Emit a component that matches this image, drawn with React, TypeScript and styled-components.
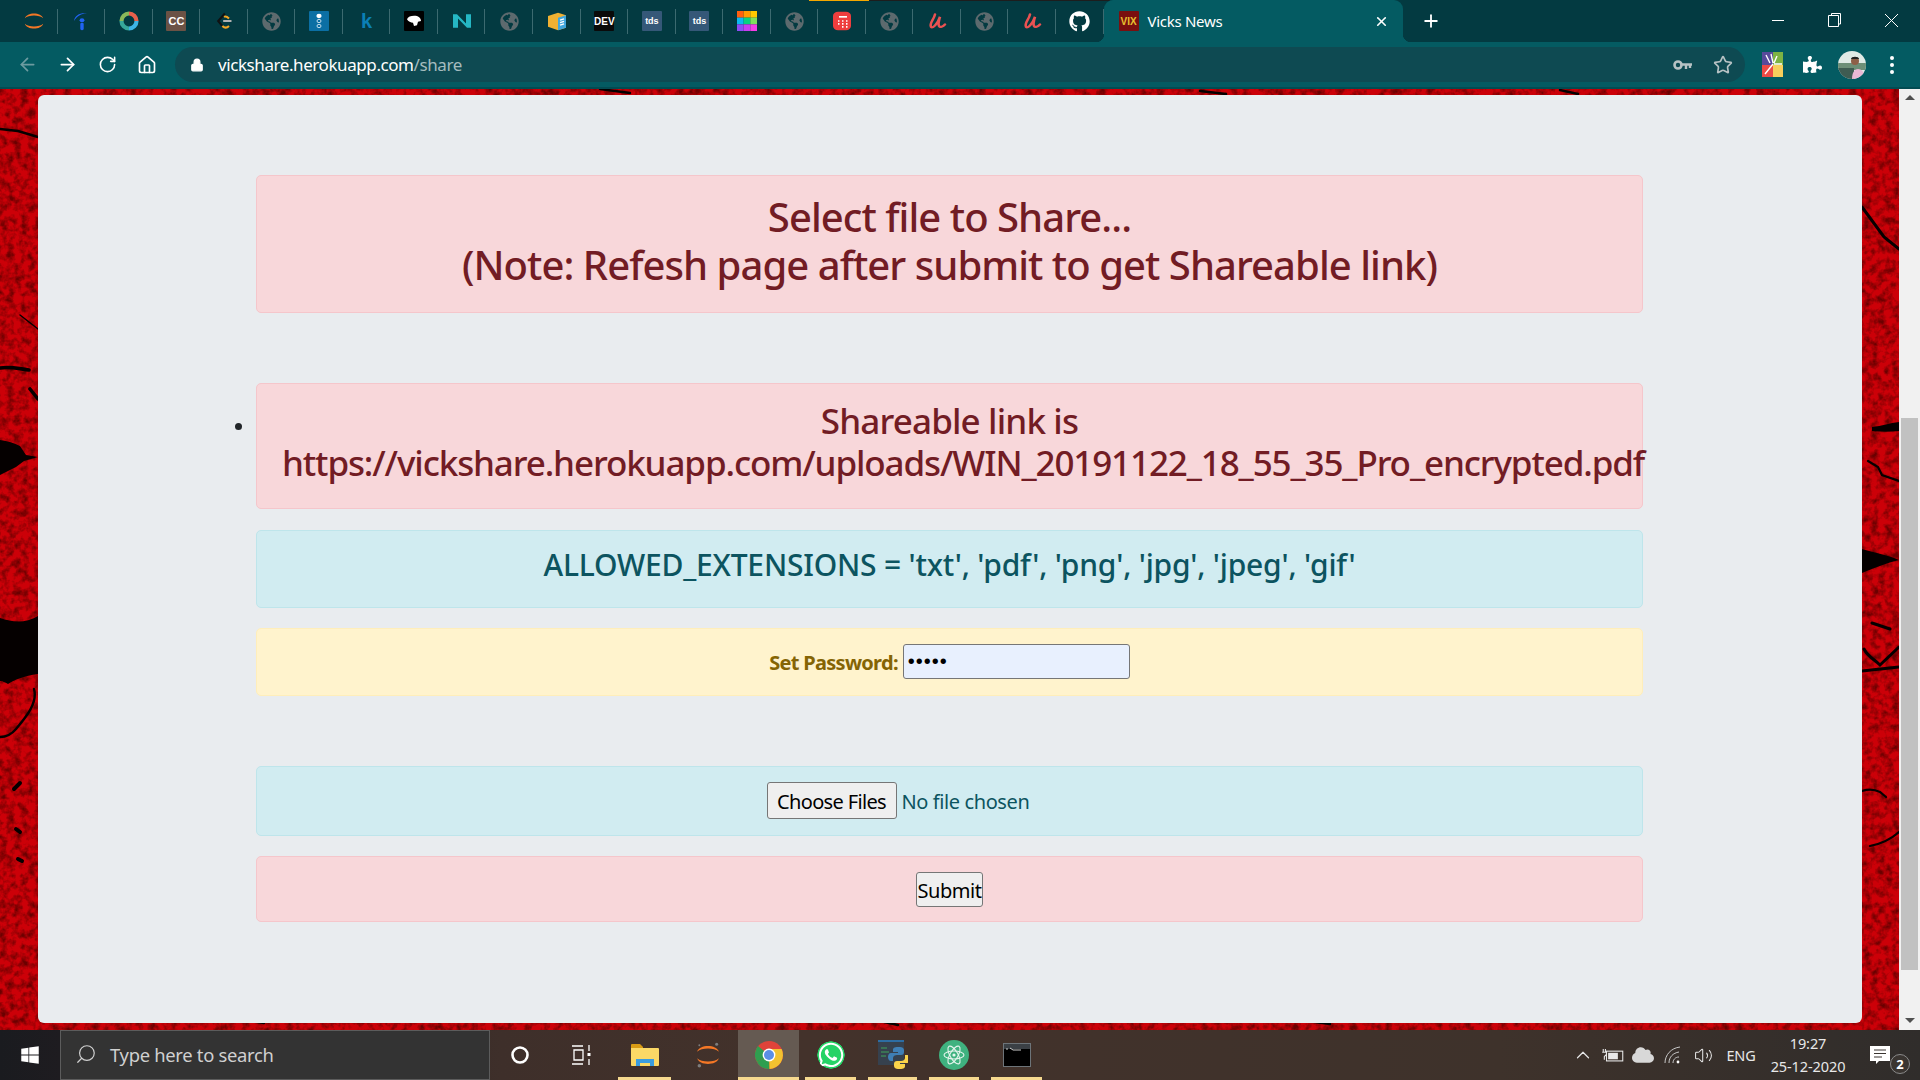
import React from 'react';
import styled, { createGlobalStyle } from 'styled-components';
import { ArrowLeft, ArrowRight, ChevronUp, Home, Lock, Plus, RotateCw, Search, Star, Volume2, X } from 'lucide-react';
import { FaCloud, FaGithub, FaGlobeAmericas, FaPuzzlePiece, FaWhatsapp, FaWindows } from 'react-icons/fa';

const GlobalStyle = createGlobalStyle`
  html, body {
    margin: 0;
    height: 100%;
    overflow: hidden;
  }
  body {
    font-family: 'Noto Sans', 'Open Sans', sans-serif;
  }
  * {
    box-sizing: border-box;
  }
`;

const Screen = styled.div`
  width: 1920px;
  height: 1080px;
  display: flex;
  flex-direction: column;
  overflow: hidden;
`;

const TitleBar = styled.div`
  height: 42px;
  flex: none;
  display: flex;
  align-items: stretch;
  padding-left: 10px;
  background: #033a41;
  color: #fff;
  position: relative;
`;

const LoadStrip = styled.div<{ $color: string; $left: number; $width: number }>`
  position: absolute;
  top: 0;
  left: ${({ $left }) => $left}px;
  width: ${({ $width }) => $width}px;
  height: 1px;
  background: ${({ $color }) => $color};
`;

const PinnedTab = styled.div`
  width: 47.55px;
  flex: none;
  display: flex;
  align-items: center;
  justify-content: center;
  position: relative;
  &::after {
    content: '';
    position: absolute;
    right: 0;
    top: 9px;
    height: 25px;
    width: 1px;
    background: #3c6a70;
  }
  &:last-of-type::after {
    display: none;
  }
`;

const ActiveTab = styled.div`
  width: 299px;
  flex: none;
  display: flex;
  align-items: center;
  padding: 0 14px 0 15px;
  gap: 9px;
  background: #045b62;
  border-radius: 9px 9px 0 0;
  position: relative;
  &::before,
  &::after {
    content: '';
    position: absolute;
    bottom: 0;
    width: 8px;
    height: 8px;
  }
  &::before {
    left: -8px;
    background: radial-gradient(circle at 0 0, transparent 8px, #045b62 8.5px);
  }
  &::after {
    right: -8px;
    background: radial-gradient(circle at 100% 0, transparent 8px, #045b62 8.5px);
  }
`;

const TabTitle = styled.span`
  flex: 1;
  font-size: 15px;
  letter-spacing: -0.3px;
  color: #fff;
  white-space: nowrap;
`;

const NewTab = styled.div`
  width: 56px;
  display: flex;
  align-items: center;
  justify-content: center;
`;

const WindowControls = styled.div`
  margin-left: auto;
  display: flex;
  align-items: flex-start;
  padding-top: 2px;
`;

const WindowButton = styled.div`
  width: 57px;
  height: 36px;
  display: flex;
  align-items: center;
  justify-content: center;
`;

const SquareFav = styled.div<{ $bg: string; $color?: string; $size?: number }>`
  width: 20px;
  height: 20px;
  background: ${({ $bg }) => $bg};
  color: ${({ $color }) => $color || '#fff'};
  font-family: 'Liberation Sans', sans-serif;
  font-size: ${({ $size }) => $size || 9}px;
  font-weight: 700;
  display: flex;
  align-items: center;
  justify-content: center;
  border-radius: 1px;
`;

const FavImage = styled.svg.attrs({ preserveAspectRatio: 'none' })`
  width: 20px;
  height: 20px;
  display: block;
`;

const ToolBar = styled.div`
  height: 47px;
  flex: none;
  display: flex;
  align-items: flex-start;
  padding: 5px 0 0 7px;
  background: #045b62;
  border-bottom: 2px solid #034b52;
`;

const NavButton = styled.div`
  width: 40px;
  height: 35px;
  flex: none;
  display: flex;
  align-items: center;
  justify-content: center;
  color: #fff;
`;

const Omnibox = styled.div`
  width: 1570px;
  height: 35px;
  margin-left: 8px;
  flex: none;
  border-radius: 18px;
  background: #0e4a52;
  display: flex;
  align-items: center;
  padding: 0 2px 0 15px;
  color: #fff;
`;

const UrlText = styled.span`
  margin-left: 14px;
  font-size: 17px;
  letter-spacing: -0.42px;
  color: #fff;
  flex: 1;
  & > em {
    font-style: normal;
    color: #a5bcbf;
  }
`;

const OmniIcon = styled.div`
  width: 40px;
  display: flex;
  justify-content: center;
  color: #b7c2c4;
`;

const ToolbarEnd = styled.div`
  display: flex;
  align-items: center;
  height: 35px;
  flex: 1;
  padding-left: 7px;
`;

const ToolIcon = styled.div`
  width: 40px;
  flex: none;
  display: flex;
  align-items: center;
  justify-content: center;
  color: #fff;
`;

const Viewport = styled.div`
  flex: 1;
  min-height: 0;
  display: flex;
`;

const PageArea = styled.div`
  flex: 1;
  position: relative;
  overflow: hidden;
  background: #c00000;
  padding: 6px 37px 7px 38px;
`;

const Backdrop = styled.svg`
  position: absolute;
  inset: 0;
  width: 100%;
  height: 100%;
`;

const Jumbotron = styled.main`
  position: relative;
  height: 100%;
  background: #e9ecef;
  border-radius: 6px;
  padding-top: 80px;
  color: #212529;
`;

const Container = styled.div`
  margin: 0 219px 0 218px;
`;

const variants = {
  danger: { bg: '#f8d7da', border: '#f5c6cb', color: '#721c24' },
  info: { bg: '#d1ecf1', border: '#bee5eb', color: '#0c5460' },
  warning: { bg: '#fff3cd', border: '#ffeeba', color: '#856404' }
};

const Alert = styled.div<{ $variant: keyof typeof variants; $after?: number }>`
  background: ${({ $variant }) => variants[$variant].bg};
  border: 1px solid ${({ $variant }) => variants[$variant].border};
  color: ${({ $variant }) => variants[$variant].color};
  border-radius: 5px;
  padding: 15px 25px;
  margin-bottom: ${({ $after }) => $after ?? 20}px;
  text-align: center;
`;

const FormAlert = styled(Alert)<{ $height: number }>`
  height: ${({ $height }) => $height}px;
  display: flex;
  justify-content: center;
  align-items: flex-start;
`;

const Heading2 = styled.h2`
  margin: 0 0 8px;
  padding-top: 2px;
  font-size: 40px;
  line-height: 48px;
  font-weight: 500;
  letter-spacing: -0.95px;
`;

const Heading3 = styled.h3`
  margin: 0 0 9px;
  padding-top: 1px;
  font-size: 35px;
  line-height: 42px;
  font-weight: 500;
  letter-spacing: -0.85px;
  white-space: nowrap;
`;

const LinkUrl = styled.span`
  letter-spacing: -1.12px;
`;

const Heading4 = styled.h4`
  margin: 0 0 9px;
  padding-top: 1px;
  font-size: 30px;
  line-height: 36px;
  font-weight: 500;
  letter-spacing: -0.2px;
`;

const LinkList = styled.ul`
  margin: 0;
  padding: 0;
  font-size: 20px;
  list-style: disc outside;
`;

const PasswordLabel = styled.label`
  font-size: 20px;
  font-weight: 700;
  line-height: 37px;
  letter-spacing: -0.7px;
  margin-right: 5px;
`;

const PasswordInput = styled.input`
  width: 227px;
  height: 35px;
  padding: 1px 4px;
  font-size: 20px;
  letter-spacing: 1px;
  font-family: 'Liberation Sans', sans-serif;
  background: #e8f0fe;
  color: #000;
  border: 1px solid #767676;
  border-radius: 3px;
`;

const FileInput = styled.input`
  width: 366px;
  height: 37px;
  font-family: 'Noto Sans', sans-serif;
  font-size: 20px;
  letter-spacing: -0.4px;
  color: #0c5460;
  &::file-selector-button {
    width: 130px;
    height: 37px;
    margin-right: 5px;
    padding: 2px 0 0;
    font: inherit;
    letter-spacing: -0.65px;
    color: #000;
    background: #efefef;
    border: 1px solid #767676;
    border-radius: 3px;
  }
`;

const SubmitButton = styled.button`
  width: 67px;
  height: 35px;
  padding: 1px 0 0;
  font-family: 'Noto Sans', sans-serif;
  font-size: 20px;
  letter-spacing: -0.45px;
  color: #000;
  background: #efefef;
  border: 1px solid #767676;
  border-radius: 3px;
`;

const Scrollbar = styled.div`
  width: 21px;
  flex: none;
  background: #f1f1f1;
  position: relative;
  display: flex;
  flex-direction: column;
  align-items: center;
  justify-content: space-between;
  padding: 6px 0 7px;
`;

const ScrollArrow = styled.div<{ $down?: boolean }>`
  width: 0;
  height: 0;
  border-left: 5px solid transparent;
  border-right: 5px solid transparent;
  border-bottom: ${({ $down }) => ($down ? '0' : '5px solid #505050')};
  border-top: ${({ $down }) => ($down ? '5px solid #505050' : '0')};
`;

const ScrollThumb = styled.div`
  position: absolute;
  left: 2px;
  right: 2px;
  top: 329px;
  height: 552px;
  background: #c1c1c1;
`;

const Taskbar = styled.footer`
  height: 50px;
  flex: none;
  display: flex;
  align-items: stretch;
  color: #fff;
  background: linear-gradient(90deg, #1a1b1f 0, #1e1c20 60px, #3e2f2a 500px, #43322b 800px, #3e322b 1500px, #302d2b 1920px);
`;

const StartButton = styled.div`
  width: 60px;
  flex: none;
  display: flex;
  align-items: center;
  justify-content: center;
`;

const SearchBox = styled.div`
  width: 430px;
  flex: none;
  background: #333;
  border: 1px solid #5c5c5c;
  display: flex;
  align-items: center;
  padding: 0 0 2px 14px;
  gap: 13px;
  color: #d0d0d0;
  font-size: 18.4px;
  letter-spacing: -0.3px;
`;

const FlippedSearch = styled(Search)`
  transform: scaleX(-1);
`;

const TaskIcon = styled.div<{ $width?: number; $open?: boolean; $active?: boolean }>`
  width: ${({ $width }) => $width ?? 62}px;
  flex: none;
  display: flex;
  align-items: center;
  justify-content: center;
  position: relative;
  background: ${({ $active }) => ($active ? '#655a52' : 'transparent')};
  &::after {
    content: '';
    display: ${({ $open }) => ($open ? 'block' : 'none')};
    position: absolute;
    left: ${({ $active }) => ($active ? 0 : 6)}px;
    right: ${({ $active }) => ($active ? 0 : 6)}px;
    bottom: 0;
    height: 3px;
    background: #f6d98f;
  }
`;

const WhatsappGlyph = styled(FaWhatsapp)`
  color: #fff;
  border-radius: 50%;
  background: radial-gradient(circle, #25d366 0 68%, transparent 70%);
`;

const Tray = styled.div`
  margin-left: auto;
  display: flex;
  align-items: center;
  font-size: 15px;
  color: #e8e8e8;
`;

const TrayIcon = styled.div`
  width: 30px;
  display: flex;
  justify-content: center;
  align-items: center;
`;

const Lang = styled.div`
  width: 44px;
  margin-left: 1px;
  text-align: center;
  font-size: 14.5px;
  letter-spacing: -0.2px;
`;

const Clock = styled.div`
  width: 88px;
  margin-left: 1px;
  text-align: center;
  font-size: 14.5px;
  line-height: 23px;
  letter-spacing: -0.1px;
`;

const NotifyBox = styled.div`
  width: 68px;
  position: relative;
  display: flex;
  justify-content: center;
  padding-right: 12px;
`;

const NotifyBadge = styled.span`
  position: absolute;
  right: 10px;
  top: 8px;
  width: 20px;
  height: 20px;
  border-radius: 50%;
  background: #3a3531;
  border: 1px solid #8a8a8a;
  color: #fff;
  font-size: 13px;
  font-weight: 700;
  display: flex;
  align-items: center;
  justify-content: center;
`;

const Jupyter = ({ size = 22, dots = false }: { size?: number; dots?: boolean }) => (
  <svg width={size} height={size} viewBox="0 0 24 24" fill="none">
    <path d="M2 9c2-7 18-7 20 0-4-4-16-4-20 0z" fill="#f37726" />
    <path d="M2 15c2 7 18 7 20 0-4 4-16 4-20 0z" fill="#f37726" />
    {dots && (
      <g fill="#7d7d7d">
        <circle cx="20" cy="2" r="1.4" />
        <circle cx="4" cy="3" r="0.9" />
        <circle cx="4" cy="22" r="1.6" />
      </g>
    )}
  </svg>
);

const InfoFav = () => (
  <FavImage viewBox="0 0 20 24">
    <circle cx="11" cy="11" r="2.4" fill="#2164f3" />
    <rect x="9.3" y="14" width="3.4" height="9" rx="1.6" fill="#2164f3" />
    <path d="M3 12C4 5 9 2 16 3 10 3 6 6 3 12z" fill="#2164f3" />
  </FavImage>
);

const RingFav = () => (
  <FavImage viewBox="0 0 24 24">
    <g fill="none" strokeWidth="5">
      <path d="M12 3a9 9 0 0 1 9 9" stroke="#e8604c" />
      <path d="M21 12a9 9 0 0 1-9 9" stroke="#3db4e6" />
      <path d="M12 21a9 9 0 0 1-9-9" stroke="#36a79a" />
      <path d="M3 12a9 9 0 0 1 9-9" stroke="#8bb85a" />
    </g>
  </FavImage>
);

const LeetFav = () => (
  <FavImage viewBox="0 0 24 24" fill="none" strokeWidth="2.4">
    <path d="M13 3 5 12l5 6" stroke="#111" />
    <path d="M10 18c3 3 6 2 8 0M12 7c2-1 4 0 6 2" stroke="#f5a623" />
    <path d="M11 12h10" stroke="#b3b3b3" />
  </FavImage>
);

const DotsFav = () => (
  <SquareFav $bg="#0b6fa4">
    <FavImage viewBox="0 0 20 24">
      <circle cx="10" cy="6" r="2.6" fill="#fff" />
      <circle cx="10" cy="12" r="2" fill="none" stroke="#cfe5f2" />
      <circle cx="10" cy="18" r="2" fill="none" stroke="#cfe5f2" />
    </FavImage>
  </SquareFav>
);

const ShadowFav = () => (
  <SquareFav $bg="#000">
    <FavImage viewBox="0 0 20 24">
      <path d="M3 10c1-4 6-5 10-4 3 1 4 4 4 6l-3 1-1 4-3 1-1-4c-2 0-5-1-6-4z" fill="#fff" />
    </FavImage>
  </SquareFav>
);

const NFav = () => (
  <FavImage viewBox="0 0 20 24">
    <path d="M1 4h4l9 11V4h5v16h-4L6 9v11H1z" fill="#25b7c4" />
  </FavImage>
);

const BoxFav = () => (
  <FavImage viewBox="0 0 20 24">
    <path d="M1 6l10-4 8 3v15l-8 3-10-4z" fill="#f0b132" />
    <path d="M11 8l8-3v15l-8 3z" fill="#3fa6dd" />
    <path d="M13 11l4-1.5M13 14l4-1.5M13 17l4-1.5" stroke="#fff" strokeWidth="1.4" />
  </FavImage>
);

const ColorsFav = () => (
  <FavImage viewBox="0 0 3 3">
    <rect width="1" height="1" fill="#ff5f0f" />
    <rect x="1" width="1" height="1" fill="#ff9a00" />
    <rect x="2" width="1" height="1" fill="#ffc800" />
    <rect y="1" width="1" height="1" fill="#0cb8f0" />
    <rect x="1" y="1" width="1" height="1" fill="#07d27f" />
    <rect x="2" y="1" width="1" height="1" fill="#7ee05c" />
    <rect y="2" width="1" height="1" fill="#8d4cf5" />
    <rect x="1" y="2" width="1" height="1" fill="#c73df0" />
    <rect x="2" y="2" width="1" height="1" fill="#f53de6" />
  </FavImage>
);

const CalcFav = () => (
  <FavImage viewBox="0 0 20 24">
    <rect x="1" y="1" width="18" height="22" rx="5" fill="#ee3e3e" />
    <path d="M7 7h8" stroke="#fff" strokeWidth="2" />
    <path d="M6 12h1.5M10 12h1.5M14 12h1.5M6 15.5h1.5M10 15.5h1.5M14 15.5h1.5M10 19h1.5M14 19h1.5" stroke="#fff" strokeWidth="2" />
  </FavImage>
);

const UdemyFav = () => (
  <FavImage viewBox="0 0 20 24" fill="none">
    <path d="M8 4C7 10 2 15 4 19c2 3 7-5 9-12-1 4-2 9-1 11 1 2 4 1 6-2" stroke="#ea5252" strokeWidth="2.6" strokeLinecap="round" />
  </FavImage>
);

const Globe = () => <FaGlobeAmericas size={19} color="#5d6a6e" />;

const pinnedTabs: React.ReactNode[] = [
  <Jupyter key="a" />,
  <InfoFav key="b" />,
  <RingFav key="c" />,
  <SquareFav key="d" $bg="#6b5245" $size={11}>CC</SquareFav>,
  <LeetFav key="e" />,
  <Globe key="f" />,
  <DotsFav key="g" />,
  <SquareFav key="h" $bg="transparent" $color="#0b7fb5" $size={20}>k</SquareFav>,
  <ShadowFav key="i" />,
  <NFav key="j" />,
  <Globe key="k" />,
  <BoxFav key="l" />,
  <SquareFav key="m" $bg="#0a0a0a" $size={10}>DEV</SquareFav>,
  <SquareFav key="n" $bg="#355878">tds</SquareFav>,
  <SquareFav key="o" $bg="#355878">tds</SquareFav>,
  <ColorsFav key="p" />,
  <Globe key="q" />,
  <CalcFav key="r" />,
  <Globe key="s" />,
  <UdemyFav key="t" />,
  <Globe key="u" />,
  <UdemyFav key="v" />,
  <FaGithub key="w" size={21} color="#fff" />
];

const KeyIcon = () => (
  <svg width="20" height="12" viewBox="0 0 20 12" fill="none">
    <circle cx="5" cy="6" r="3.5" stroke="#b7c2c4" strokeWidth="2.6" />
    <path d="M9 5.5h10M13 5v5M17 5v4" stroke="#b7c2c4" strokeWidth="2.4" />
  </svg>
);

const ExtensionIcon = () => (
  <svg width="21" height="25" viewBox="0 0 21 25">
    <rect width="11" height="13" fill="#574a9b" />
    <rect x="11" width="10" height="13" fill="#7cb343" />
    <rect y="13" width="11" height="12" fill="#ec4b45" />
    <rect x="11" y="13" width="10" height="12" fill="#f7cf5c" />
    <path d="M3 22 11 12M4 3l4 8M9 2l2 9M15 4l-3 7M20 12h-8" stroke="#fff" strokeWidth="1.4" />
  </svg>
);

const Avatar = () => (
  <svg width="28" height="28" viewBox="0 0 28 28">
    <clipPath id="avatarClip"><circle cx="14" cy="14" r="14" /></clipPath>
    <g clipPath="url(#avatarClip)">
      <rect width="28" height="28" fill="#dfeae6" />
      <rect y="12" width="28" height="7" fill="#6d8f78" />
      <rect y="17" width="16" height="11" fill="#3f5c52" />
      <path d="M14 28c0-7 3-10 6-10s7 3 8 10z" fill="#eab8d4" />
      <circle cx="17" cy="10" r="4" fill="#8d5f48" />
      <path d="M13 8c0-3 8-3 8 0z" fill="#222" />
    </g>
  </svg>
);

const Dots = () => (
  <svg width="4" height="18" viewBox="0 0 4 18" fill="#fff">
    <circle cx="2" cy="2" r="2" />
    <circle cx="2" cy="9" r="2" />
    <circle cx="2" cy="16" r="2" />
  </svg>
);

const RedWall = () => (
  <Backdrop preserveAspectRatio="none" viewBox="0 0 1899 941">
    <filter id="grain" x="0" y="0" width="100%" height="100%" colorInterpolationFilters="sRGB">
      <feTurbulence type="fractalNoise" baseFrequency="0.14" numOctaves="3" seed="4" />
      <feColorMatrix values="0 0 0 0 0.42  0 0 0 0 0  0 0 0 0 0  2.4 0 0 0 -0.95" />
    </filter>
    <rect width="1899" height="941" fill="#cc0008" />
    <rect width="1899" height="941" filter="url(#grain)" />
    <g fill="#050000" stroke="#050000" strokeLinecap="round">
      <path d="M0 529c14 5 26 5 38-2v58c-14 2-24 6-30 10-2-1-5-3-8-3z" stroke="none" />
      <path d="M34 600c4 14-8 28-18 40-5 6-10 8-16 8" fill="none" strokeWidth="2.4" />
      <path d="M0 40l18 2 20 6" fill="none" strokeWidth="2.4" />
      <path d="M20 226l18 14" fill="none" strokeWidth="1.5" />
      <path d="M0 279c10-2 20 1 29 2M30 300l8 10" fill="none" strokeWidth="3.6" />
      <path d="M0 351c8 1 14 3 20 6l6 9 12 2-14 4-8 6-16 8z" stroke="none" />
      <path d="M14 700l6-6M16 740l4 3M18 770l4 2" fill="none" strokeWidth="4" />
      <path d="M1862 118l22 30 15 12" fill="none" strokeWidth="3" />
      <path d="M1872 338c10-1 18-4 27-5v9c-9 1-18 1-27 0z" stroke="none" />
      <path d="M1868 372l10 6 4 8 17 6" fill="none" strokeWidth="2.2" />
      <path d="M1862 460c14 4 26 6 37 11-12 3-25 8-37 13z" stroke="none" />
      <path d="M1872 534l18 6M1864 560c4 8 10 10 16 16l19-18M1862 582l37-4" fill="none" strokeWidth="3" />
      <path d="M1862 702c6-2 12-2 18 1l6 5M1870 757c10-2 20-6 29-14" fill="none" strokeWidth="2.2" />
      <path d="M600 0l30 4M1200 2l26 3M1560 1l18 4M240 930l24 4M880 932l18 4M1300 931l30 4" fill="none" strokeWidth="2.4" />
    </g>
  </Backdrop>
);

const ChromeIcon = () => (
  <svg width="28" height="28" viewBox="0 0 28 28">
    <circle cx="14" cy="14" r="14" fill="#e0433a" />
    <path d="M14 14 1.9 21a14 14 0 0 0 12.6 7z" fill="#2f9e4f" />
    <path d="M14 8h12.6A14 14 0 0 1 14.5 28L14 14z" fill="#f2c230" />
    <path d="M14 14 1.9 21A14 14 0 0 1 3 5z" fill="#2f9e4f" />
    <circle cx="14" cy="14" r="6.4" fill="#fff" />
    <circle cx="14" cy="14" r="5" fill="#5b8ee6" />
  </svg>
);

const FolderIcon = () => (
  <svg width="28" height="24" viewBox="0 0 28 24">
    <path d="M0 2a1 1 0 0 1 1-1h8l3 3v4H0z" fill="#d99b14" />
    <path d="M0 5h27a1 1 0 0 1 1 1v16a1 1 0 0 1-1 1H1a1 1 0 0 1-1-1z" fill="#fbd866" />
    <path d="M5 23v-7h18v7h-4v-3H9v3z" fill="#3b9ddf" />
  </svg>
);

const PythonIcon = () => (
  <svg width="30" height="30" viewBox="0 0 30 30">
    <rect x="0" y="0" width="26" height="25" fill="#36414e" />
    <rect width="26" height="2" fill="#2d6da3" />
    <path d="M3 8h6M3 12h8M3 16h5" stroke="#3fa35a" strokeWidth="1.2" />
    <path d="M17 7c-4 0-5 1-5 3v2h5v1h-7c-2 0-3 2-3 4s1 4 3 4h2v-3c0-2 2-3 4-3h4c2 0 3-1 3-3v-2c0-2-2-3-4-3z" fill="#3f7fb5" transform="translate(3 0)" />
    <path d="M17 7c-4 0-5 1-5 3v2h5v1h-7c-2 0-3 2-3 4s1 4 3 4h2v-3c0-2 2-3 4-3h4c2 0 3-1 3-3v-2c0-2-2-3-4-3z" fill="#fbd44a" transform="rotate(180 18 17.5) translate(-3 -1)" />
  </svg>
);

const AtomIcon = () => (
  <svg width="30" height="30" viewBox="0 0 30 30" fill="none">
    <circle cx="15" cy="15" r="15" fill="#3fb27f" />
    <g stroke="#e6f5ee" strokeWidth="1.1">
      <ellipse cx="15" cy="15" rx="10" ry="4" />
      <ellipse cx="15" cy="15" rx="10" ry="4" transform="rotate(60 15 15)" />
      <ellipse cx="15" cy="15" rx="10" ry="4" transform="rotate(120 15 15)" />
    </g>
    <circle cx="15" cy="15" r="1.6" fill="#e6f5ee" />
  </svg>
);

const TerminalIcon = () => (
  <svg width="28" height="24" viewBox="0 0 28 24">
    <rect width="28" height="24" fill="#6d7479" />
    <rect x="1" y="6" width="26" height="17" fill="#000" />
    <rect x="1" y="1" width="26" height="5" fill="#3b4045" />
    <path d="M3 6h2M7 5l3 2h8" stroke="#cfcfcf" strokeWidth="1" fill="none" />
  </svg>
);

const TaskViewIcon = () => (
  <svg width="20" height="22" viewBox="0 0 20 22" fill="none" stroke="#fff" strokeWidth="1.3">
    <path d="M1 2h11M1 20h11M3 6h9v10H3zM18 1v6M18 15v6" />
    <rect x="16.5" y="9" width="3" height="3" fill="#fff" stroke="none" />
  </svg>
);

const BatteryIcon = () => (
  <svg width="22" height="13" viewBox="0 0 20 12" fill="none">
    <rect x="4" y="2" width="15" height="9" stroke="#e8e8e8" />
    <rect x="5.5" y="3.5" width="9" height="6" fill="#e8e8e8" />
    <path d="M1 0v3M3 0v3M0 3h4v2L2 7v3" stroke="#e8e8e8" />
  </svg>
);

const WifiIcon = () => (
  <svg width="18" height="18" viewBox="0 0 18 18" fill="none" stroke="#c9c9c9">
    <path d="M1 17C1 9 7 2 16 1M5 17c0-6 4-10 10-11M9 17c0-3 2-6 6-6" />
    <circle cx="14" cy="16" r="1.4" fill="#fff" stroke="none" />
  </svg>
);

const NotifyIcon = () => (
  <svg width="20" height="18" viewBox="0 0 20 18">
    <path d="M0 0h20v15H9l-3 3v-3H0z" fill="#fff" />
    <path d="M4 4h12M4 7.5h12M4 11h8" stroke="#3a3531" />
  </svg>
);

const VixFav = () => (
  <SquareFav $bg="#7a0f0f" $color="#e8c030" $size={10}>VIX</SquareFav>
);

export const App: React.FC = () => (
  <Screen>
    <GlobalStyle />
    <TitleBar>
      <LoadStrip $color="#f5a800" $left={809} $width={60} />
      <LoadStrip $color="#1d1d1d" $left={869} $width={241} />
      {pinnedTabs.map((icon, i) => (
        <PinnedTab key={i}>{icon}</PinnedTab>
      ))}
      <ActiveTab>
        <VixFav />
        <TabTitle>Vicks News</TabTitle>
        <X size={15} strokeWidth={2.6} color="#fff" />
      </ActiveTab>
      <NewTab>
        <Plus size={20} strokeWidth={2.2} color="#fff" />
      </NewTab>
      <WindowControls>
        <WindowButton>
          <svg width="14" height="14" viewBox="0 0 14 14" stroke="#fff"><path d="M1 7.5h12" /></svg>
        </WindowButton>
        <WindowButton>
          <svg width="14" height="16" viewBox="0 0 14 16" fill="none" stroke="#fff"><path d="M3.5 3V1.5h9V12H11M.5 3.5h10v11H.5z" /></svg>
        </WindowButton>
        <WindowButton>
          <svg width="15" height="15" viewBox="0 0 15 15" stroke="#fff"><path d="M1 1l13 13M14 1 1 14" /></svg>
        </WindowButton>
      </WindowControls>
    </TitleBar>
    <ToolBar>
      <NavButton><ArrowLeft size={21} color="#6d9ba0" /></NavButton>
      <NavButton><ArrowRight size={21} /></NavButton>
      <NavButton><RotateCw size={19} /></NavButton>
      <NavButton><Home size={20} /></NavButton>
      <Omnibox>
        <Lock size={14} fill="#fff" color="#fff" />
        <UrlText>vickshare.herokuapp.com<em>/share</em></UrlText>
        <OmniIcon><KeyIcon /></OmniIcon>
        <OmniIcon><Star size={20} /></OmniIcon>
      </Omnibox>
      <ToolbarEnd>
        <ToolIcon><ExtensionIcon /></ToolIcon>
        <ToolIcon><FaPuzzlePiece size={19} /></ToolIcon>
        <ToolIcon><Avatar /></ToolIcon>
        <ToolIcon><Dots /></ToolIcon>
      </ToolbarEnd>
    </ToolBar>
    <Viewport>
      <PageArea>
        <RedWall />
        <Jumbotron>
          <Container>
            <Alert $variant="danger" $after={70}>
              <Heading2>
                Select file to Share...
                <br />
                (Note: Refesh page after submit to get Shareable link)
              </Heading2>
            </Alert>
            <LinkList>
              <li>
                <Alert $variant="danger" $after={21}>
                  <Heading3>
                    Shareable link is
                    <br />
                    <LinkUrl>https://vickshare.herokuapp.com/uploads/WIN_20191122_18_55_35_Pro_encrypted.pdf</LinkUrl>
                  </Heading3>
                </Alert>
              </li>
            </LinkList>
            <Alert $variant="info">
              <Heading4>ALLOWED_EXTENSIONS = 'txt', 'pdf', 'png', 'jpg', 'jpeg', 'gif'</Heading4>
            </Alert>
            <FormAlert $variant="warning" $height={68} $after={70}>
              <PasswordLabel>Set Password:</PasswordLabel>
              <PasswordInput type="password" defaultValue="12345" />
            </FormAlert>
            <FormAlert $variant="info" $height={70}>
              <FileInput type="file" multiple />
            </FormAlert>
            <FormAlert $variant="danger" $height={66}>
              <SubmitButton type="button">Submit</SubmitButton>
            </FormAlert>
          </Container>
        </Jumbotron>
      </PageArea>
      <Scrollbar>
        <ScrollArrow />
        <ScrollThumb />
        <ScrollArrow $down />
      </Scrollbar>
    </Viewport>
    <Taskbar>
      <StartButton><FaWindows size={20} /></StartButton>
      <SearchBox>
        <FlippedSearch size={22} strokeWidth={1.3} />
        <span>Type here to search</span>
      </SearchBox>
      <TaskIcon $width={60}>
        <svg width="20" height="20" viewBox="0 0 20 20" fill="none" stroke="#fff" strokeWidth="2.6"><circle cx="10" cy="10" r="7.5" /></svg>
      </TaskIcon>
      <TaskIcon $width={62}><TaskViewIcon /></TaskIcon>
      <TaskIcon $open $width={65}><FolderIcon /></TaskIcon>
      <TaskIcon $width={61}><Jupyter size={26} dots /></TaskIcon>
      <TaskIcon $open $active $width={61}><ChromeIcon /></TaskIcon>
      <TaskIcon $open $width={63}><WhatsappGlyph size={28} /></TaskIcon>
      <TaskIcon $open $width={61}><PythonIcon /></TaskIcon>
      <TaskIcon $open $width={62}><AtomIcon /></TaskIcon>
      <TaskIcon $open $width={63}><TerminalIcon /></TaskIcon>
      <Tray>
        <TrayIcon><ChevronUp size={22} strokeWidth={1.3} /></TrayIcon>
        <TrayIcon><BatteryIcon /></TrayIcon>
        <TrayIcon><FaCloud size={22} color="#d8d8d8" /></TrayIcon>
        <TrayIcon><WifiIcon /></TrayIcon>
        <TrayIcon><Volume2 size={19} strokeWidth={1.3} /></TrayIcon>
        <Lang>ENG</Lang>
        <Clock>19:27<br />25-12-2020</Clock>
        <NotifyBox>
          <NotifyIcon />
          <NotifyBadge>2</NotifyBadge>
        </NotifyBox>
      </Tray>
    </Taskbar>
  </Screen>
);

export default App;
